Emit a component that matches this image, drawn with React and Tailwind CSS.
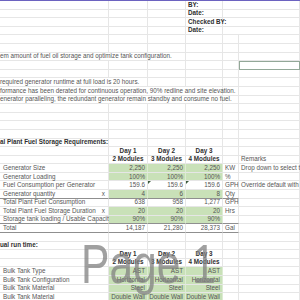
import React from 'react'

const GRID = 'grid grid-cols-[109px_39px_38px_37px_16px_61px] h-[8.6px]'
const SPAN = { 1: 'col-span-1', 2: 'col-span-2', 3: 'col-span-3', 4: 'col-span-4', 5: 'col-span-5', 6: 'col-span-6' }

function Cell({ span = 1, children, right, center, green, bold, dark, label, marker, className = '' }) {
  return (
    <div
      className={[
        SPAN[span],
        'relative flex items-center whitespace-nowrap leading-none border-r border-b px-[2px] overflow-visible',
        dark ? 'border-b-[#8f8f8f]' : 'border-b-[#e6e6e6]',
        green ? 'bg-[#c9e1b8] border-r-[#dcebd3]' : 'border-r-[#e6e6e6]',
        right ? 'justify-end' : center ? 'justify-center' : '',
        bold ? 'font-bold text-[#2e2e2e]' : 'text-[#555555]',
        label ? 'pl-[3px] justify-between' : '',
        className,
      ].join(' ')}
    >
      {marker && (
        <span className="absolute left-0 top-0 w-0 h-0 border-t-[3px] border-r-[3px] border-t-[#3c5a3c] border-r-transparent" />
      )}
      {children}
    </div>
  )
}

function Blank() {
  return (
    <div className={GRID}>
      <Cell />
      <Cell />
      <Cell />
      <Cell />
      <Cell />
      <Cell />
    </div>
  )
}

function Header({ title }) {
  return (
    <div className={GRID}>
      <Cell bold className="pl-0">{title}</Cell>
      <Cell />
      <Cell />
      <Cell />
      <Cell />
      <Cell />
    </div>
  )
}

function DataRow({ label, sym, vals, unit, remark, green, dark, markers }) {
  return (
    <div className={GRID}>
      <Cell label dark={dark}>
        <span>{label}</span>
        <span className="pr-[1px]">{sym}</span>
      </Cell>
      {vals.map((v, i) => (
        <Cell key={i} right green={green} dark={dark} marker={markers && i > 0}>
          {v}
        </Cell>
      ))}
      <Cell dark={dark}>{unit}</Cell>
      <Cell>{remark}</Cell>
    </div>
  )
}

function DayHeads({ remark }) {
  return (
    <>
      <div className={GRID}>
        <Cell />
        <Cell center bold>Day 1</Cell>
        <Cell center bold>Day 2</Cell>
        <Cell center bold>Day 3</Cell>
        <Cell />
        <Cell />
      </div>
      <div className={GRID}>
        <Cell />
        <Cell center bold>2 Modules</Cell>
        <Cell center bold>3 Modules</Cell>
        <Cell center bold>4 Modules</Cell>
        <Cell />
        <Cell>{remark}</Cell>
      </div>
    </>
  )
}

export default function App() {
  return (
    <div className="relative w-[300px] h-[300px] overflow-hidden bg-white font-['Liberation_Sans',Arial,sans-serif] text-[6.3px]">
      <div className="h-[1px] bg-[#6c63c0]" />

      {['BY:', 'Date:', 'Checked BY:', 'Date:'].map((t, i) => (
        <div key={i} className={GRID}>
          <Cell />
          <Cell />
          <Cell />
          <Cell bold>{t}</Cell>
          <Cell span={2} />
        </div>
      ))}

      <Blank />
      <Blank />
      <div className={GRID}>
        <Cell span={3} className="pl-0">em amount of fuel oil storage and optimize tank configuration.</Cell>
        <Cell />
        <Cell />
        <Cell />
      </div>
      <div className={GRID}>
        <Cell />
        <Cell />
        <Cell />
        <Cell />
        <Cell />
        <Cell className="outline outline-[1.5px] outline-[#93a898] -outline-offset-1" />
      </div>
      <Blank />
      <div className={GRID}>
        <Cell span={2} className="pl-0">required generator runtime at full load is 20 hours.</Cell>
        <Cell />
        <Cell />
        <Cell />
        <Cell />
      </div>
      <div className={GRID}>
        <Cell span={4} className="pl-0">formance has been derated for continuous operation, 90% redline and site elevation.</Cell>
        <Cell />
        <Cell />
      </div>
      <div className={GRID}>
        <Cell span={4} className="pl-0">enerator paralleling, the redundant generator remain standby and consume no fuel.</Cell>
        <Cell />
        <Cell />
      </div>
      <Blank />
      <Blank />
      <Blank />
      <Blank />

      <Header title="al Plant Fuel Storage Requirements:" />
      <DayHeads remark="Remarks" />
      <DataRow label="Generator Size" vals={['2,250', '2,250', '2,250']} unit="KW" remark="Drop down to select the generator size" green />
      <DataRow label="Generator Loading" vals={['100%', '100%', '100%']} unit="%" green />
      <DataRow label="Fuel Consumption per Generator" vals={['159.6', '159.6', '159.6']} unit="GPH" remark="Override default with actual" markers />
      <DataRow label="Generator quantity" sym="x" vals={['4', '6', '8']} unit="Qty" green dark />
      <DataRow label="Total Plant Fuel Consumption" vals={['638', '958', '1,277']} unit="GPH" />
      <DataRow label="Total Plant Fuel Storage Duration" sym="x" vals={['20', '20', '20']} unit="Hrs" green />
      <DataRow label="Storage tank loading / Usable Capacity" sym="/" vals={['90%', '90%', '90%']} green dark />
      <DataRow label="Total" vals={['14,187', '21,280', '28,373']} unit="Gal" dark />
      <Blank />

      <Header title="ual run time:" />
      <DayHeads />
      <DataRow label="Bulk Tank Type" vals={['AST', 'AST', 'AST']} green />
      <DataRow label="Bulk Tank Configuration" vals={['Horizontal', 'Horizontal', 'Horizontal']} green />
      <DataRow label="Bulk Tank Material" vals={['Steel', 'Steel', 'Steel']} green />
      <DataRow label="Bulk Tank Material" vals={['Double Wall', 'Double Wall', 'Double Wall']} green />

      <div className="pointer-events-none absolute left-[81px] top-[236px] origin-left scale-x-[0.76] font-['Liberation_Sans',Arial,sans-serif] text-[56px] leading-none text-[#808080]/75">
        Page 1
      </div>
    </div>
  )
}
